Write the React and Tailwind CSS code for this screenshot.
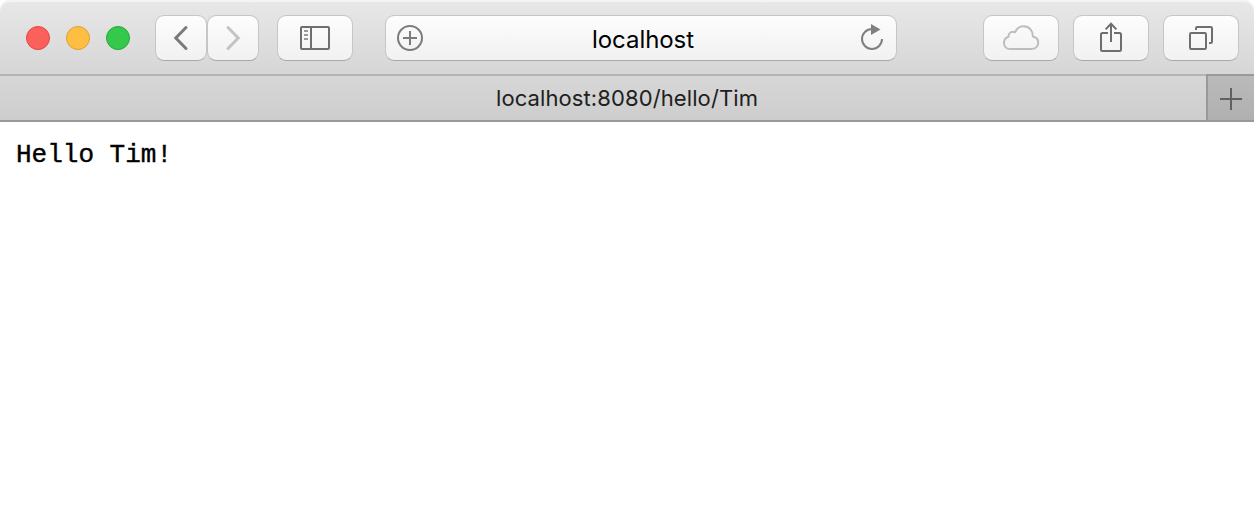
function ToolButton({ label, className, children }) {
  return (
    <button
      aria-label={label}
      className={`flex h-[46px] shrink-0 items-center justify-center rounded-[9px] border border-[#c6c6c6] border-b-[#a9a9a9] bg-linear-to-b from-[#fdfdfd] to-[#f1f1f1] bg-clip-padding ${className}`}
    >
      {children}
    </button>
  );
}

function BackIcon() {
  return (
    <svg width="50" height="44" fill="none" stroke="#7a7a7a" strokeWidth="3" strokeLinecap="round" strokeLinejoin="miter">
      <path d="M30 11.5 19.8 22 30 32.5" />
    </svg>
  );
}

function ForwardIcon() {
  return (
    <svg width="50" height="44" fill="none" stroke="#c3c3c3" strokeWidth="3" strokeLinecap="round">
      <path d="M20 11.5 30.2 22 20 32.5" />
    </svg>
  );
}

function SidebarIcon() {
  return (
    <svg width="30" height="24" fill="none" stroke="#6e6e6e" strokeWidth="2">
      <rect x="1" y="1" width="28" height="22" rx="1" />
      <path d="M11 1v22" />
      <path d="M4 5h4M4 9h4M4 13h4" stroke="#9a9a9a" />
    </svg>
  );
}

function AddIcon() {
  return (
    <svg width="26" height="26" fill="none" stroke="#7c7c7c" strokeWidth="2">
      <circle cx="13" cy="13" r="12" />
      <path d="M13 6v14M6 13h14" />
    </svg>
  );
}

function ReloadIcon() {
  return (
    <svg width="24" height="28" fill="none" stroke="#808080" strokeWidth="2">
      <path d="M22 15A10 10 0 1 1 12 5" />
      <path d="M11 0 20.500 5.500 11 11z" fill="#808080" stroke="none" />
    </svg>
  );
}

function CloudIcon() {
  return (
    <svg width="38" height="28" fill="none" stroke="#bdbdbd" strokeWidth="2" strokeLinejoin="round">
      <path d="M8 25h21c4.400 0 7.200-2.600 7.200-6.300 0-3.300-2.200-5.500-5.400-6.100C31 6.500 27 2.200 21.700 2.200c-4 0-7.100 2.400-8.500 6C9.700 6.800 6.200 8.900 6.700 12.500 3.700 13.600 2 15.900 2 18.700c0 3.800 2.600 6.300 6 6.300z" />
    </svg>
  );
}

function ShareIcon() {
  return (
    <svg width="24" height="32" fill="none" stroke="#6e6e6e" strokeWidth="2">
      <path d="M9 11H3.500Q2 11 2 12.500V27.500Q2 29 3.500 29H20.500Q22 29 22 27.500V12.500Q22 11 20.500 11H15" />
      <path d="M12 20V2M6.600 7.400 12 1.800l5.400 5.600" />
    </svg>
  );
}

function TabsIcon() {
  return (
    <svg width="24" height="24" fill="none" stroke="#6e6e6e" strokeWidth="2">
      <rect x="1" y="7" width="16" height="16" rx="1.200" />
      <path d="M7 4V2.200Q7 1 8.200 1H21.800Q23 1 23 2.200V15.800Q23 17 21.800 17H20" />
    </svg>
  );
}

export default function App() {
  return (
    <div className="flex h-[510px] w-[1254px] flex-col overflow-hidden bg-white">
      <header className="flex h-[76px] shrink-0 items-start rounded-t-[10px] border-b-2 border-[#b5b5b5] bg-linear-to-b from-[#e8e8e8] to-[#d6d6d6] pt-[15px] pr-[15px] pl-[26px] shadow-[inset_0_2px_0_#f3f3f3]">
        <div className="flex h-[46px] w-[129px] shrink-0 items-center gap-4">
          <span className="size-6 rounded-full border border-[#e2463f] bg-[#fc605b]" />
          <span className="size-6 rounded-full border border-[#dfa033] bg-[#fdbe41]" />
          <span className="size-6 rounded-full border border-[#24a936] bg-[#34c94b]" />
        </div>
        <ToolButton label="Back" className="w-[52px]"><BackIcon /></ToolButton>
        <ToolButton label="Forward" className="w-[52px]"><ForwardIcon /></ToolButton>
        <ToolButton label="Sidebar" className="ml-[18px] w-[76px]"><SidebarIcon /></ToolButton>
        <div className="ml-8 flex h-[46px] w-[512px] shrink-0 items-center justify-between rounded-[9px] border border-[#c6c6c6] border-b-[#a9a9a9] bg-linear-to-b from-[#fdfdfd] to-[#f1f1f1] bg-clip-padding pr-3 pl-[11px]">
          <AddIcon />
          <span className="pt-[3px] pl-[3px] font-['Inter',sans-serif] text-[24px] leading-8 tracking-[-0.05px] text-black">localhost</span>
          <ReloadIcon />
        </div>
        <div className="ml-auto flex gap-[14px]">
          <ToolButton label="iCloud tabs" className="w-[76px]"><CloudIcon /></ToolButton>
          <ToolButton label="Share" className="w-[76px]"><ShareIcon /></ToolButton>
          <ToolButton label="Show tabs" className="w-[76px]"><TabsIcon /></ToolButton>
        </div>
      </header>
      <div className="flex h-[46px] shrink-0 border-b-2 border-[#999999] bg-linear-to-b from-[#d7d7d7] to-[#cdcdcd]">
        <div className="flex flex-1 items-center justify-center pl-12 font-['Inter',sans-serif] text-[22px] leading-8 tracking-[0.1px] text-[#202020]">
          localhost:8080/hello/Tim
        </div>
        <button aria-label="New tab" className="-mt-0.5 flex w-12 items-center justify-center border-t-2 border-l-2 border-[#999999] bg-linear-to-b from-[#bababa] to-[#b0b0b0] pt-0.5">
          <svg width="22" height="22" fill="none" stroke="#606060" strokeWidth="2">
            <path d="M11 0v22M0 11h22" />
          </svg>
        </button>
      </div>
      <main className="px-4 pt-[17px]">
        <pre className="font-['Liberation_Mono',monospace] text-[26px] leading-8 text-black [-webkit-text-stroke:0.4px_black]">Hello Tim!</pre>
      </main>
    </div>
  );
}
